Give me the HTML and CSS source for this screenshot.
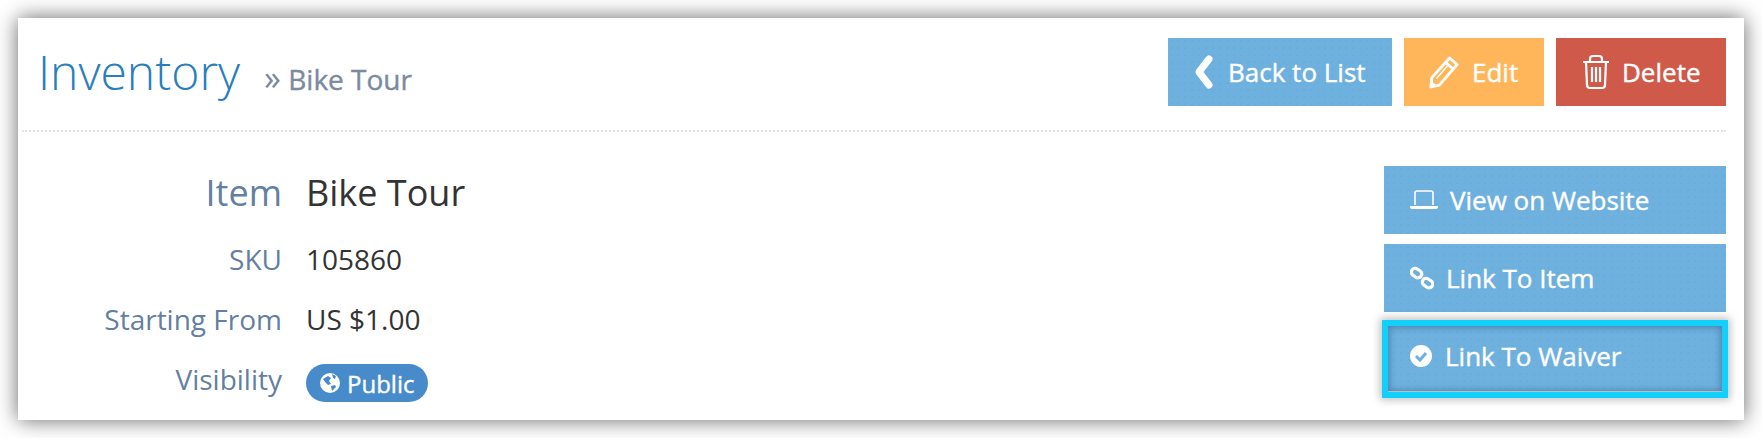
FILE: index.html
```html
<!DOCTYPE html>
<html lang="en">
<head>
  <meta charset="UTF-8" />
  <title>Inventory - Bike Tour</title>
  <link rel="stylesheet" href="styles.css">
</head>
<body>

<div class="card">
  <div class="page-head">
    <div class="page-title">
      <h1>Inventory</h1>
      <span class="crumb"><span class="crumb-arrow">»</span> Bike Tour</span>
    </div>
    <div class="head-actions">
      <a class="btn btn-blue btn-back">
        <svg class="icon-back" viewBox="0 0 20 36"><path d="M15 5 L5 18 L15 31" fill="none" stroke="#fff" stroke-width="7" stroke-linecap="round" stroke-linejoin="round"/></svg>
        Back to List
      </a>
      <a class="btn btn-orange btn-edit">
        <svg class="icon-edit" viewBox="0 0 32 36"><path d="M22 3 L30 10 L11 32 L2 34 L3 24 Z M18 8 L26 15" fill="none" stroke="#fff" stroke-width="3" stroke-linejoin="round"/><path d="M8 25 L20 11" fill="none" stroke="#fff" stroke-width="1.5"/><path d="M1 35 L2 27 L9 33 Z" fill="#fff"/></svg>
        Edit
      </a>
      <a class="btn btn-red btn-delete">
        <svg class="icon-trash" viewBox="0 0 28 36"><path d="M1 8 H27 M8 8 V5 Q8 2 11 2 H17 Q20 2 20 5 V8 M4 8 L5 31 Q5 34 8 34 H20 Q23 34 23 31 L24 8 M10 13 V28 M14 13 V28 M18 13 V28" fill="none" stroke="#fff" stroke-width="2.2"/></svg>
        Delete
      </a>
    </div>
  </div>

  <div class="page-body">
    <div class="details">
      <div class="label label-big">Item</div><div class="value value-big">Bike Tour</div>
      <div class="label">SKU</div><div class="value">105860</div>
      <div class="label">Starting From</div><div class="value">US $1.00</div>
      <div class="label">Visibility</div>
      <div class="value">
        <span class="pill">
          <svg class="icon-globe" viewBox="0 0 20 20"><circle cx="10" cy="10" r="10" fill="#fff"/><path d="M3 6 L8 3 L11 5 L9 8 L11 11 L8 12 L5 9 Z M12 1 L16 3 L15 6 L13 5 Z M11 13 L15 12 L16 14 L12 18 Z" fill="#478bca"/></svg>
          Public
        </span>
      </div>
    </div>

    <div class="side-actions">
      <a class="btn btn-blue btn-side btn-web">
        <svg class="icon-laptop" viewBox="0 0 28 20"><path d="M5 15 V3 Q5 1 7 1 H21 Q23 1 23 3 V15" fill="none" stroke="#fff" stroke-width="1.6"/><path d="M0 16 H28 V17 Q28 19 26 19 H2 Q0 19 0 17 Z" fill="#fff"/></svg>
        View on Website
      </a>
      <a class="btn btn-blue btn-side">
        <svg class="icon-link" viewBox="0 0 24 24"><g fill="none" stroke="#fff" stroke-width="3.2"><rect x="1" y="3" width="11" height="7.5" rx="3.7" transform="rotate(35 6 7)"/><rect x="12" y="13" width="11" height="7.5" rx="3.7" transform="rotate(35 17 17)"/></g></svg>
        Link To Item
      </a>
      <a class="btn btn-blue btn-side btn-marked">
        <svg class="icon-check" viewBox="0 0 22 22"><circle cx="11" cy="11" r="11" fill="#fff"/><path d="M6 11 L10 15 L16 8" fill="none" stroke="#6eb0dd" stroke-width="3"/></svg>
        Link To Waiver
      </a>
    </div>
  </div>
</div>

</body>
</html>
```

FILE: styles.css
```css
body {
  font-family: "Open Sans", Arial, sans-serif;
  background-color: #fff;
  margin: 0;
  padding: 18px 0 0 18px;
  height: 438px;
  box-sizing: border-box;
}
.card {
  background-color: white;
  box-shadow: 0 0 20px rgba(0, 0, 0, 0.6);
  width: 1726px;
  height: 402px;
  box-sizing: border-box;
  padding: 0 18px 0 4px;
}
.page-head {
  display: flex;
  justify-content: space-between;
  height: 114px;
  padding-top: 20px;
  box-sizing: border-box;
  border-bottom: 2px dotted #e2e2e2;
}
.page-title {
  display: flex;
  align-items: baseline;
  padding: 3px 0 0 16px;
}
h1 {
  font-size: 48px;
  font-weight: 300;
  color: #2a7ebd;
  margin: 0;
  line-height: 62px;
}
.crumb {
  font-size: 28px;
  color: #7c8aa0;
  margin-left: 24px;
  -webkit-text-stroke: 0.4px #7c8aa0;
}
.crumb-arrow {
  font-size: 34px;
  -webkit-text-stroke: 0;
}
.head-actions {
  display: flex;
  gap: 12px;
  align-items: flex-start;
}
.btn {
  display: flex;
  align-items: center;
  height: 68px;
  box-sizing: border-box;
  color: white;
  font-size: 26px;
  -webkit-text-stroke: 0.4px #fff;
}
.btn-blue {
  background-color: #6eb1de;
  background-image: radial-gradient(rgba(70, 130, 180, 0.12) 1px, transparent 1px);
  background-size: 7px 7px;
}
.btn-orange {
  background-color: #ffb65b;
}
.btn-red {
  background-color: #cf5a4a;
}
.btn-back {
  width: 224px;
  padding-left: 26px;
}
.btn-edit {
  width: 140px;
  padding-left: 25px;
}
.btn-delete {
  width: 170px;
  padding-left: 26px;
}
.icon-back {
  width: 20px;
  height: 36px;
  margin-right: 14px;
}
.icon-edit {
  width: 30px;
  height: 36px;
  margin-right: 13px;
}
.icon-trash {
  width: 28px;
  height: 36px;
  margin-right: 12px;
}
.page-body {
  display: flex;
  justify-content: space-between;
  padding-top: 34px;
}
.details {
  display: grid;
  grid-template-columns: 260px auto;
  grid-template-rows: 74px 60px 60px 60px;
  column-gap: 24px;
  align-items: center;
  align-content: start;
  margin-top: -11px;
}
.label {
  text-align: right;
  color: #647f9f;
  font-size: 28px;
}
.label-big {
  font-size: 36px;
}
.value {
  color: #333;
  font-size: 28px;
}
.value-big {
  font-size: 36px;
}
.pill {
  display: inline-flex;
  align-items: center;
  height: 38px;
  margin-top: 8px;
  padding: 0 14px;
  border-radius: 19px;
  background-color: #478bca;
  color: white;
  font-size: 24px;
  -webkit-text-stroke: 0.4px #fff;
}
.icon-globe {
  width: 20px;
  height: 20px;
  margin-right: 7px;
}
.side-actions {
  display: flex;
  flex-direction: column;
  gap: 10px;
  width: 342px;
}
.btn-side {
  padding-left: 26px;
}
.icon-laptop {
  width: 28px;
  height: 20px;
  margin-right: 12px;
}
.icon-link {
  width: 24px;
  height: 24px;
  margin-right: 12px;
}
.icon-check {
  width: 22px;
  height: 22px;
  margin-right: 13px;
}
.btn-marked {
  height: 74px;
  padding-bottom: 6px;
  outline: 6px solid #12d0fb;
  outline-offset: -4px;
  box-shadow: inset 0 -5px 0 0 #b9bfc4, inset 0 0 7px 5px rgba(40, 80, 120, 0.55), 0 0 8px 4px rgba(0, 0, 0, 0.25);
}
```
